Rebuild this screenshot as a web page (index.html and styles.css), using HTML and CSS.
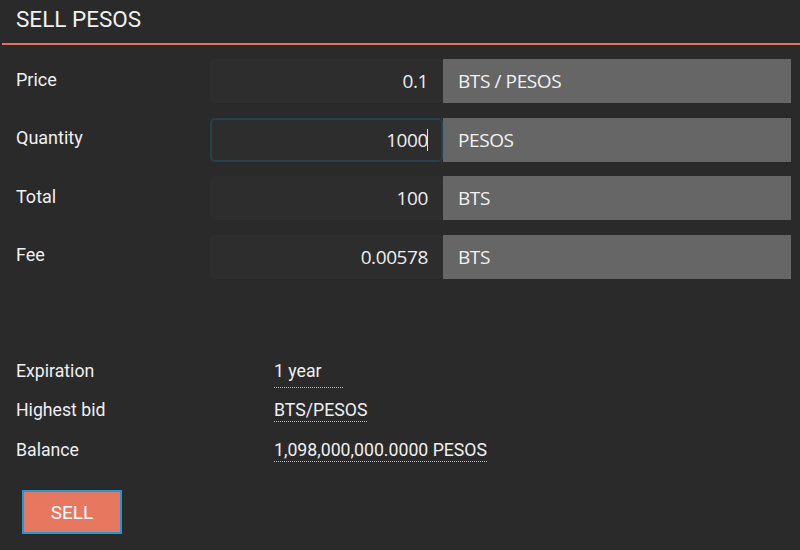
FILE: index.html
```html
<!DOCTYPE html>
<html>
<head>
<meta charset="utf-8">
<link rel="stylesheet" href="styles.css">
</head>
<body>
<div class="panel">
  <div class="header">SELL PESOS</div>
  <div class="form">
    <div class="row">
      <div class="label">Price</div>
      <div class="field"><span class="value">0.1</span></div>
      <div class="unit">BTS / PESOS</div>
    </div>
    <div class="row">
      <div class="label">Quantity</div>
      <div class="field focused"><span class="value">1000<span class="caret"></span></span></div>
      <div class="unit">PESOS</div>
    </div>
    <div class="row">
      <div class="label">Total</div>
      <div class="field"><span class="value">100</span></div>
      <div class="unit">BTS</div>
    </div>
    <div class="row">
      <div class="label">Fee</div>
      <div class="field"><span class="value">0.00578</span></div>
      <div class="unit">BTS</div>
    </div>
  </div>
  <div class="info">
    <div class="info-row">
      <div class="info-label">Expiration</div>
      <div class="info-value"><span class="dotted exp">1 year</span></div>
    </div>
    <div class="info-row">
      <div class="info-label">Highest bid</div>
      <div class="info-value"><span class="dotted">BTS/PESOS</span></div>
    </div>
    <div class="info-row">
      <div class="info-label">Balance</div>
      <div class="info-value"><span class="dotted">1,098,000,000.0000 PESOS</span></div>
    </div>
  </div>
  <div class="actions">
    <button class="sell">SELL</button>
  </div>
</div>
</body>
</html>
```
FILE: styles.css
```css
html, body {
  margin: 0;
  padding: 0;
  background: #2a2a2a;
  width: 800px;
  height: 550px;
  overflow: hidden;
}
body {
  font-family: Roboto, "Liberation Sans", sans-serif;
  color: #f0f0f0;
}
.panel {
  display: flex;
  flex-direction: column;
}
.header {
  height: 37px;
  margin-left: 2px;
  padding-left: 14px;
  padding-bottom: 6px;
  font-size: 22.5px;
  line-height: 26px;
  border-bottom: 2px solid #e0735d;
  display: flex;
  align-items: center;
}
.form {
  display: flex;
  flex-direction: column;
  gap: 14.5px;
  padding-top: 14px;
  padding-right: 9px;
}
.row {
  display: grid;
  grid-template-columns: 210px 233px 1fr;
  height: 44px;
  align-items: stretch;
}
.label {
  padding-left: 16px;
  font-size: 18px;
  display: flex;
  align-items: center;
  padding-bottom: 4px;
}
.field {
  background: #2d2d2d;
  border: 1px solid #2e2e2e;
  border-radius: 4px;
  display: flex;
  align-items: center;
  justify-content: flex-end;
  padding-right: 14px;
  font-family: "Open Sans", "Noto Sans", sans-serif;
  font-size: 19px;
  color: #eeeeee;
  box-sizing: border-box;
  letter-spacing: -0.4px;
}
.field.focused {
  border: 2px solid #27414c;
  border-radius: 5px;
  padding-right: 13px;
}
.caret {
  display: inline-block;
  width: 1px;
  height: 22px;
  background: #e0e0e0;
  vertical-align: -4px;
  margin-left: -1px;
}
.unit {
  background: #666666;
  display: flex;
  align-items: center;
  padding-left: 15px;
  font-family: "Open Sans", "Noto Sans", sans-serif;
  font-size: 19px;
  color: #f2f2f2;
  letter-spacing: -0.4px;
}
.info {
  display: flex;
  flex-direction: column;
  padding-top: 82px;
}
.info-row {
  display: grid;
  grid-template-columns: 274px 1fr;
  height: 39.5px;
  font-size: 17.7px;
}
.info-label {
  padding-left: 16px;
}
.dotted {
  display: inline-block;
  padding-bottom: 1px;
  border-bottom: 1px dotted #bbbbbb;
}
.dotted.exp {
  width: 69px;
  padding-bottom: 6px;
}
.actions {
  padding-left: 22px;
  padding-top: 11px;
}
.sell {
  width: 100px;
  height: 44px;
  background: #e8775f;
  border: 2px solid #1a9ad6;
  color: #ffffff;
  font-family: Roboto, "Liberation Sans", sans-serif;
  font-size: 19px;
  padding: 0;
}
```
